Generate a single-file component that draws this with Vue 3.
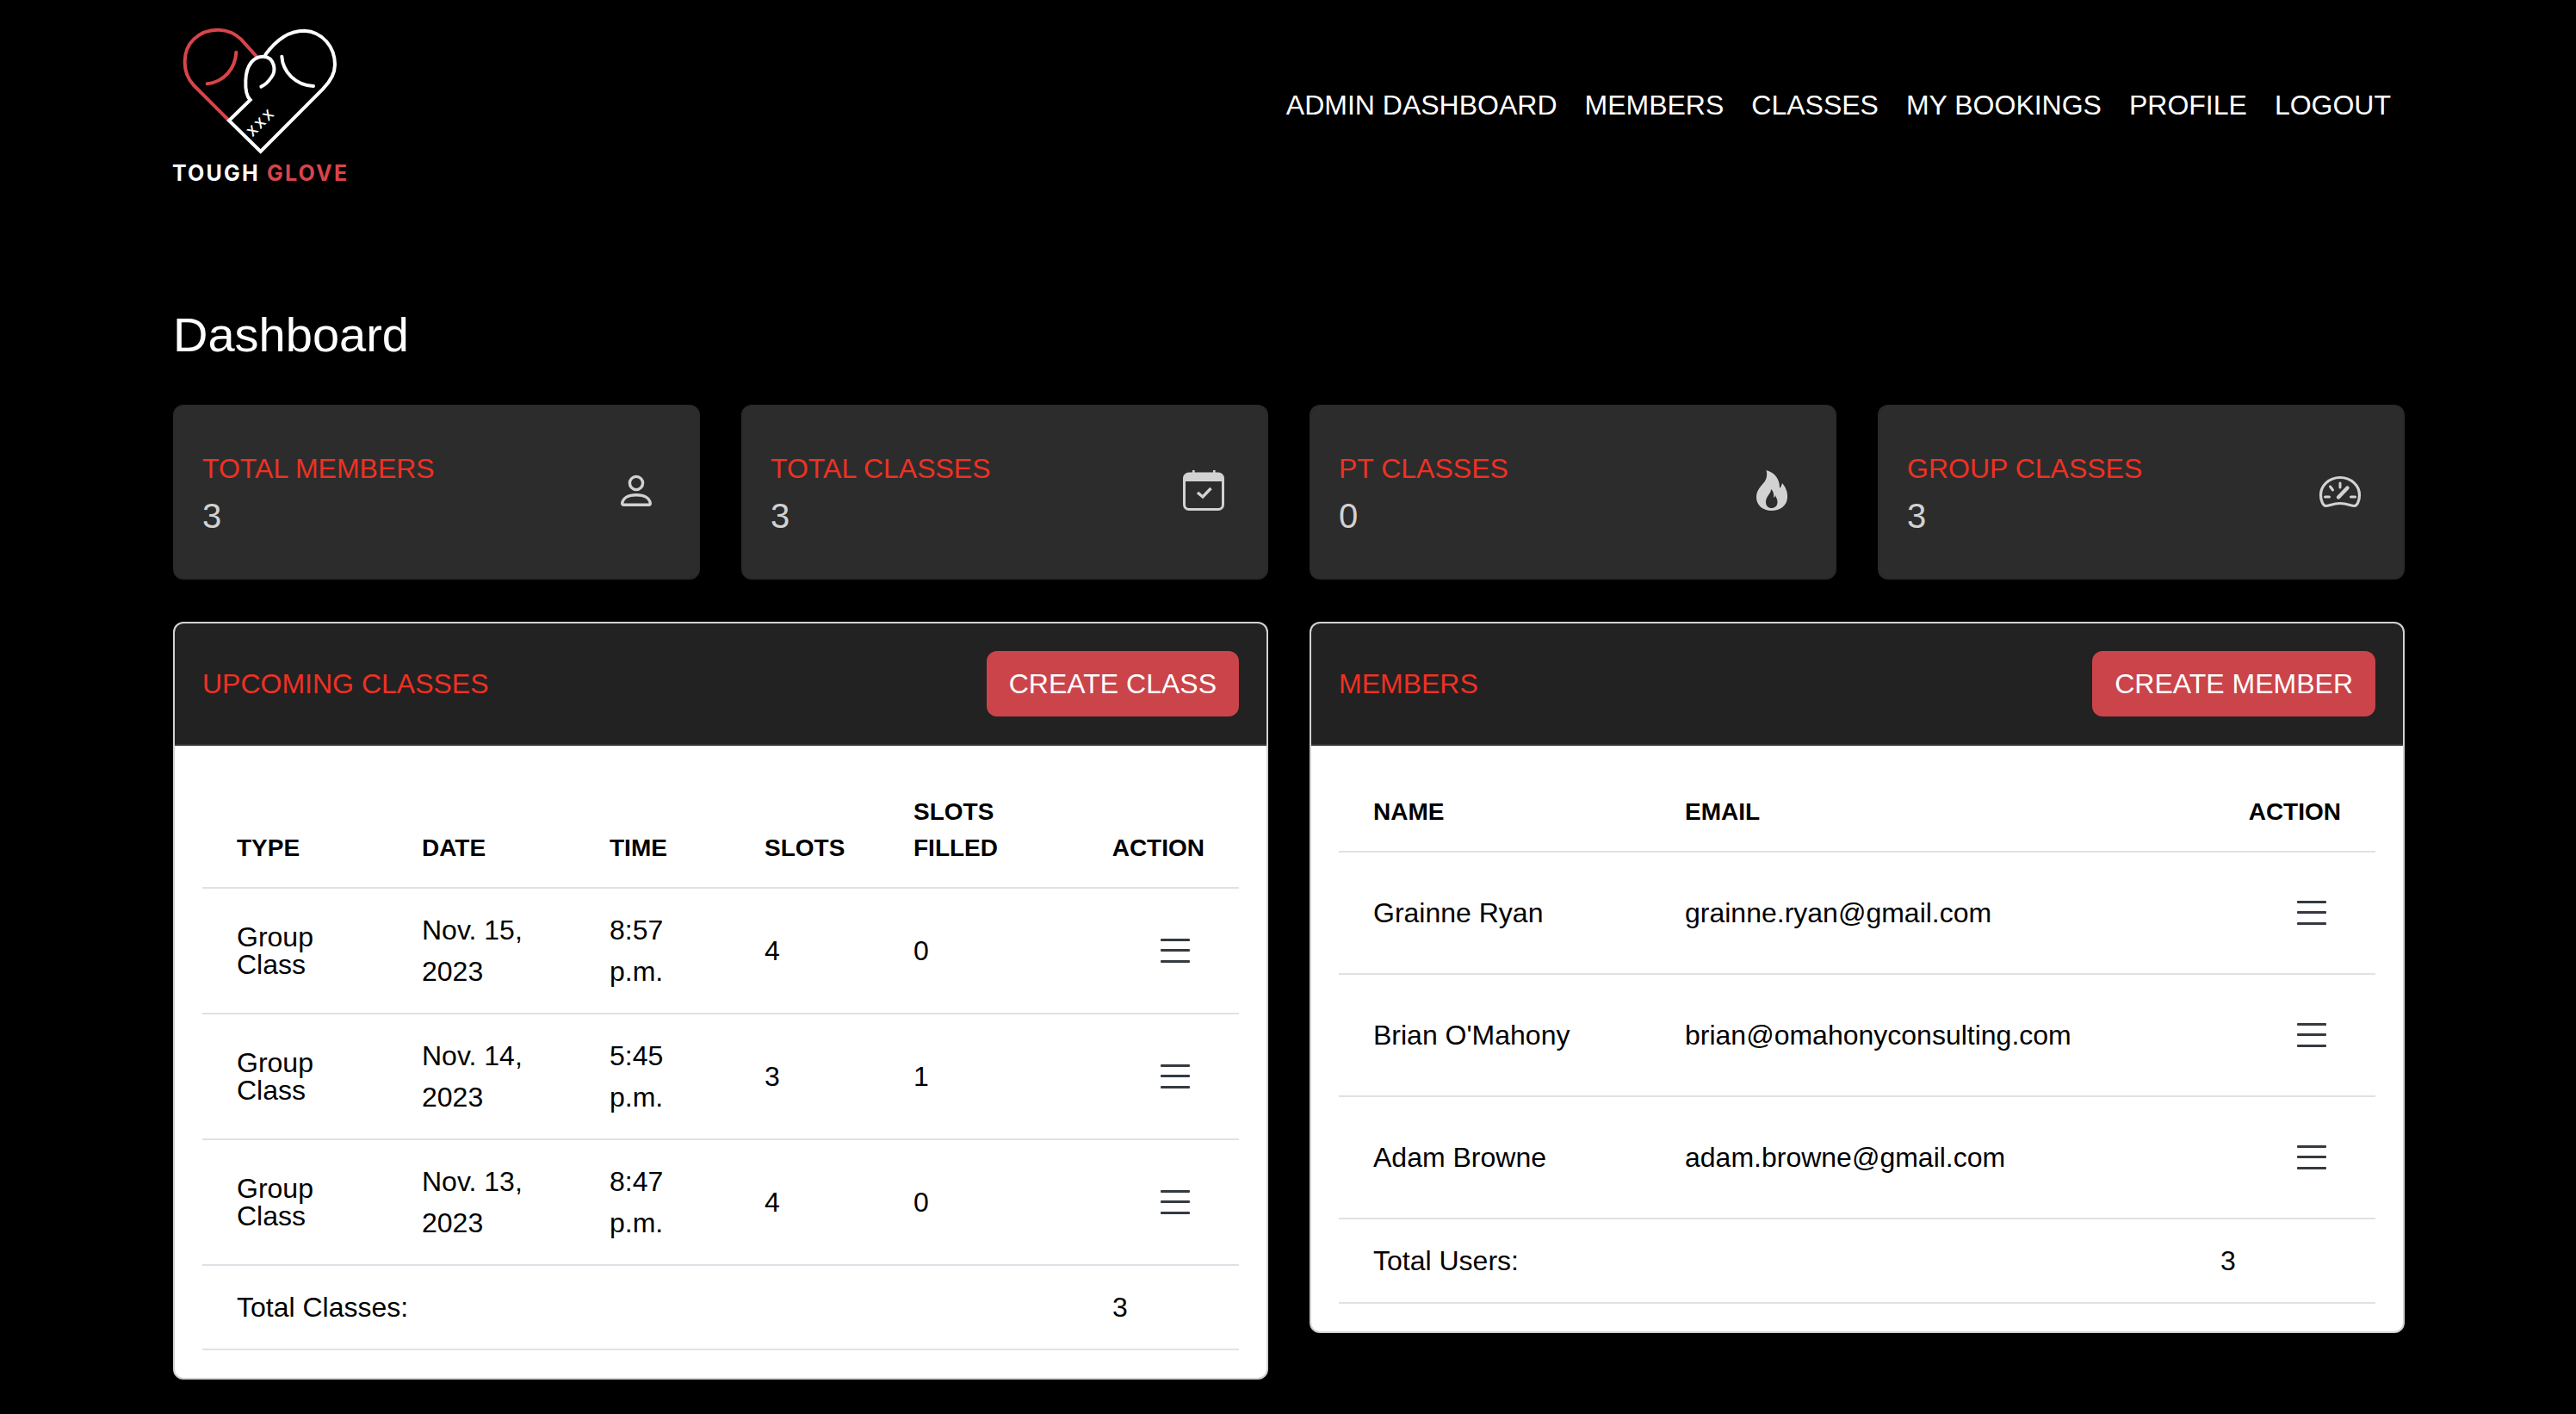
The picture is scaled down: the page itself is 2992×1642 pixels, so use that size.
<script setup>
const stats = [
  { label: 'TOTAL MEMBERS', value: 3, icon: 'person' },
  { label: 'TOTAL CLASSES', value: 3, icon: 'calendar' },
  { label: 'PT CLASSES', value: 0, icon: 'fire' },
  { label: 'GROUP CLASSES', value: 3, icon: 'gauge' },
]
const navItems = ['ADMIN DASHBOARD', 'MEMBERS', 'CLASSES', 'MY BOOKINGS', 'PROFILE', 'LOGOUT']
const classes = [
  { date: 'Nov. 15, 2023', time: '8:57 p.m.', slots: 4, filled: 0 },
  { date: 'Nov. 14, 2023', time: '5:45 p.m.', slots: 3, filled: 1 },
  { date: 'Nov. 13, 2023', time: '8:47 p.m.', slots: 4, filled: 0 },
]
const members = [
  { name: 'Grainne Ryan', email: 'grainne.ryan@gmail.com' },
  { name: "Brian O'Mahony", email: 'brian@omahonyconsulting.com' },
  { name: 'Adam Browne', email: 'adam.browne@gmail.com' },
]
</script>

<template>
  <div class="page">
    <header class="top">
      <div class="brand">
        <div class="mark">
          <svg class="mark-svg" viewBox="63 0 600 558" fill="none" stroke-width="12" stroke-linecap="round" stroke-linejoin="miter">
            <path stroke="#d9444a" d="M258 420 L135 297 C92 252 95 175 135 137 C180 93 255 93 300 137 L355 198" />
            <path stroke="#d9444a" d="M283 182 C280 240 240 285 182 292" />
            <path stroke="#fff" d="M385 190 C425 135 470 107 520 107 C585 110 627 165 627 225 C627 260 610 285 585 310 L368 528 L258 420 L332 348 C318 335 315 305 316 280 C318 225 345 195 380 197 C415 200 425 245 405 270 C395 285 385 295 370 302" />
            <path stroke="#fff" d="M442 197 C445 250 490 297 552 300" />
          </svg>
          <span class="xxx">XXX</span>
        </div>
        <div class="brand-name">TOUGH <span>GLOVE</span></div>
      </div>
      <nav class="nav">
        <a v-for="item in navItems" :key="item">{{ item }}</a>
      </nav>
    </header>

    <main class="main">
      <h1 class="title">Dashboard</h1>

      <section class="stats">
        <div v-for="s in stats" :key="s.label" class="stat">
          <div>
            <div class="stat-label">{{ s.label }}</div>
            <div class="stat-value">{{ s.value }}</div>
          </div>
          <div class="stat-icon">
            <svg v-if="s.icon === 'person'" width="60" height="60" viewBox="0 0 60 60" fill="none" stroke="#d2d2d2" stroke-width="3.4">
              <circle cx="31" cy="19" r="7.6" />
              <path d="M14.7 42.5 C15.5 36 22 32.7 31 32.7 C40 32.7 46.5 36 47.3 42.5 Q47.5 44.3 45.5 44.3 H16.5 Q14.5 44.3 14.7 42.5 Z" stroke-linejoin="round" />
            </svg>
            <svg v-else-if="s.icon === 'calendar'" width="60" height="60" viewBox="0 3 60 60" fill="none">
              <path d="M17 7 h2.6 v5 H17 z M41 7 h2.6 v5 H41 z" fill="#d2d2d2" />
              <rect x="7.5" y="11" width="45" height="41.5" rx="5.5" stroke="#d2d2d2" stroke-width="3" />
              <path d="M8 15 a5 5 0 0 1 5 -5 h34 a5 5 0 0 1 5 5 v5 H8 z" fill="#d2d2d2" />
              <path d="M23 33 L29 38 L38.5 28" stroke="#d2d2d2" stroke-width="3.4" />
            </svg>
            <svg v-else-if="s.icon === 'fire'" width="60" height="60" viewBox="1.5 2 60 60">
              <path fill="#d2d2d2" fill-rule="evenodd" d="M25 6 C36 9 41 18 40.5 27 C42 25.5 43 23.5 43.5 21 C48 26 50 32 49.5 38 C49 47 41 53 31 53 C21 53 13.5 46.5 13.5 37.5 C13.5 29 19 24.5 23 19.5 C25.5 16 26.5 11 25 6 Z M30.5 28 C31 33 24.5 36 24.5 43 C24.5 47.5 27.5 50 31 50 C35 50 38 47.5 38 43 C38 38.5 36 38 35.5 35 C35 36.5 34.5 37.5 33.5 38 C34 34 33.5 30.5 30.5 28 Z" />
            </svg>
            <svg v-else width="60" height="60" viewBox="0 0 60 60" fill="none" stroke="#d2d2d2" stroke-linecap="round">
              <path d="M30 12.5 C17 12.5 7.5 22 7.5 33 C7.5 40 10.5 45.5 13.5 45.5 C17 45.5 22 42.5 30 42.5 C38 42.5 43 45.5 46.5 45.5 C49.5 45.5 52.5 40 52.5 33 C52.5 22 43 12.5 30 12.5 Z" stroke-width="3.2" />
              <path d="M30 19 V24 M18.5 23 L21.5 27 M12.5 35 H17.5 M42.5 35 H47.5" stroke-width="3" />
              <path d="M28 35.5 L38.5 24.5" stroke-width="4.4" />
            </svg>
          </div>
        </div>
      </section>

      <section class="panels">
        <div class="panel">
          <div class="panel-head">
            <span class="panel-title">UPCOMING CLASSES</span>
            <button class="btn">CREATE CLASS</button>
          </div>
          <div class="panel-body">
            <table class="tbl">
              <colgroup>
                <col style="width: 215px" /><col style="width: 218px" /><col style="width: 180px" />
                <col style="width: 173px" /><col style="width: 231px" /><col style="width: 187px" />
              </colgroup>
              <thead>
                <tr><th>TYPE</th><th>DATE</th><th>TIME</th><th>SLOTS</th><th>SLOTS<br />FILLED</th><th class="right">ACTION</th></tr>
              </thead>
              <tbody>
                <tr v-for="c in classes" :key="c.date">
                  <td><span class="tight">Group<br />Class</span></td>
                  <td>{{ c.date }}</td>
                  <td>{{ c.time }}</td>
                  <td>{{ c.slots }}</td>
                  <td>{{ c.filled }}</td>
                  <td class="right"><span class="menu"><i></i><i></i><i></i></span></td>
                </tr>
                <tr>
                  <td colspan="5">Total Classes:</td>
                  <td class="count">3</td>
                </tr>
              </tbody>
            </table>
          </div>
        </div>

        <div class="panel">
          <div class="panel-head">
            <span class="panel-title">MEMBERS</span>
            <button class="btn">CREATE MEMBER</button>
          </div>
          <div class="panel-body">
            <table class="tbl members">
              <colgroup>
                <col style="width: 362px" /><col style="width: 622px" /><col style="width: 220px" />
              </colgroup>
              <thead>
                <tr><th>NAME</th><th>EMAIL</th><th class="right">ACTION</th></tr>
              </thead>
              <tbody>
                <tr v-for="m in members" :key="m.email" class="member-row">
                  <td>{{ m.name }}</td>
                  <td>{{ m.email }}</td>
                  <td class="right"><span class="menu"><i></i><i></i><i></i></span></td>
                </tr>
                <tr>
                  <td colspan="2">Total Users:</td>
                  <td class="count">3</td>
                </tr>
              </tbody>
            </table>
          </div>
        </div>
      </section>
    </main>
  </div>
</template>

<style>
html, body { background: #000; margin: 0; }
</style>

<style scoped>
.page {
  font-family: "Liberation Sans", Arial, sans-serif;
  font-size: 32px;
  line-height: 48px;
  color: #000;
  padding: 0 199px 41px 201px;
  box-sizing: border-box;
}
.top {
  display: flex;
  justify-content: space-between;
  align-items: flex-start;
  height: 216px;
}
.mark { position: relative; width: 200px; height: 186px; }
.mark-svg { display: block; width: 200px; height: 186px; }
.xxx {
  position: absolute;
  left: 102px;
  top: 142px;
  font: 600 15px/15px Inter, sans-serif;
  letter-spacing: 2px;
  color: #fff;
  transform: translate(-50%, -50%) rotate(-45deg);
}
.brand-name {
  font: 700 25px/30px Inter, sans-serif;
  letter-spacing: 2.2px;
  margin-left: -1px;
  color: #fff;
  white-space: nowrap;
}
.brand-name span { color: #d9444a; }
.nav {
  display: flex;
  gap: 32px;
  padding: 98px 16px 0 0;
  color: #fff;
  white-space: nowrap;
}
.title {
  margin: 0;
  padding-top: 139px;
  font-size: 56px;
  line-height: 67px;
  font-weight: 400;
  color: #fff;
}
.stats {
  display: grid;
  grid-template-columns: repeat(4, 612px);
  gap: 48px;
  margin-top: 48px;
}
.stat {
  height: 203px;
  box-sizing: border-box;
  padding: 48px 32px;
  background: #2c2c2c;
  border: 2px solid #2a2a2a;
  border-radius: 12px;
  display: flex;
  justify-content: space-between;
  align-items: flex-start;
}
.stat-label { color: #ee3124; white-space: nowrap; }
.stat-value { margin-top: 7px; color: #d2d2d2; font-size: 40px; }
.stat-icon { margin: 22px 11px 0 0; width: 60px; height: 60px; }
.stat-icon svg { display: block; }
.panels {
  display: grid;
  grid-template-columns: 1272px 1272px;
  gap: 48px;
  margin-top: 49px;
  align-items: start;
}
.panel {
  background: #fff;
  border: 2px solid #d2d2d2;
  border-radius: 12px;
  overflow: hidden;
}
.panel-head {
  display: flex;
  justify-content: space-between;
  align-items: center;
  padding: 32px;
  background: #222;
  border-bottom: 2px solid #333;
}
.panel-title { color: #ee3124; }
.btn {
  font: inherit;
  color: #fff;
  background: #cb444a;
  border: 0;
  border-radius: 12px;
  height: 76px;
  padding: 0 26px;
  white-space: nowrap;
}
.panel-body { padding: 32px; }
.tbl {
  width: 100%;
  table-layout: fixed;
  border-collapse: collapse;
}
.tbl th, .tbl td {
  padding: 24px 40px;
  text-align: left;
  border-bottom: 2px solid #dee2e6;
  vertical-align: middle;
}
.tbl th {
  font-size: 28px;
  line-height: 42px;
  font-weight: 700;
  vertical-align: bottom;
  white-space: nowrap;
}
.tbl th.right, .tbl td.right { text-align: right; padding-left: 0; }
.tbl td.count { padding-right: 0; }
.tight { display: block; line-height: 32px; }
.member-row td { padding-top: 0; padding-bottom: 0; height: 140px; }
.menu {
  display: inline-flex;
  flex-direction: column;
  justify-content: space-between;
  width: 34px;
  height: 28px;
  margin-right: 17px;
  margin-bottom: 6px;
  vertical-align: middle;
}
.menu i {
  display: block;
  height: 3px;
  border-radius: 1px;
  background: #343a40;
}
</style>
